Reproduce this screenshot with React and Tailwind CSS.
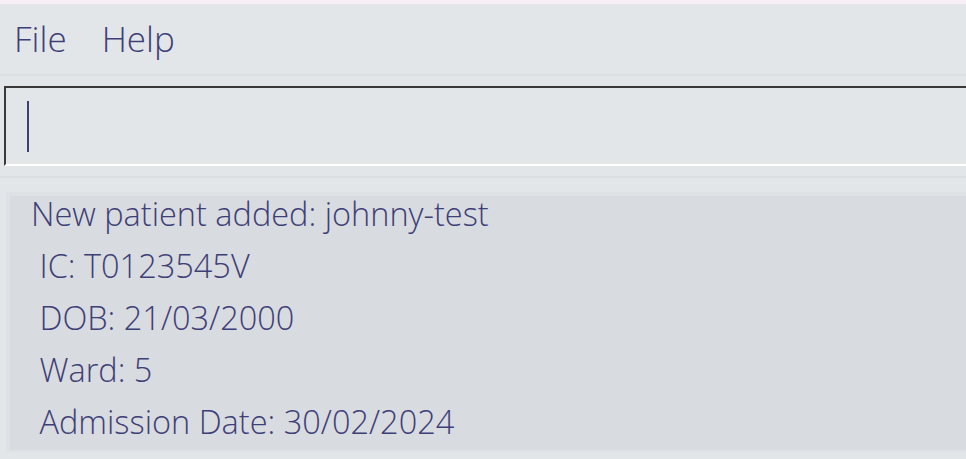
export default function App() {
  const lines = [
    "New patient added: johnny-test",
    " IC: T0123545V",
    " DOB: 21/03/2000",
    " Ward: 5",
    " Admission Date: 30/02/2024",
  ];

  return (
    <div
      className="w-[966px] h-[459px] overflow-hidden bg-[#e2e6e9] text-[#3f3f78] font-light"
      style={{ fontFamily: '"Open Sans", "Noto Sans", sans-serif' }}
    >
      <div className="h-[4px] bg-[#f6eff6]" />

      {/* menu bar */}
      <div className="h-[70px] flex items-center pl-[14px] gap-[35px] text-[35px]">
        <span>File</span>
        <span>Help</span>
      </div>
      <div className="h-[2px] bg-[#dcdfe2]" />

      {/* command box */}
      <div className="pt-[10px] pl-[4px]">
        <div className="h-[80px] border-l-2 border-t-2 border-b-2 border-l-[#3a3a3a] border-t-[#3a3a3a] border-b-white flex items-center pl-[21px]">
          <div className="w-[2px] h-[51px] bg-[#3f3f78]" />
        </div>
      </div>

      <div className="h-[10px]" />
      <div className="h-[2px] bg-[#dcdfe2]" />
      <div className="h-[14px]" />

      {/* result display */}
      <div className="ml-[6px] border-l-4 border-t-4 border-b-2 border-[#dfe2e5] bg-[#d8dbdf] h-[260px] pl-[21px]">
        {lines.map((l, i) => (
          <div key={i} className="h-[52px] text-[32.5px] leading-[36px] whitespace-pre">
            {l}
          </div>
        ))}
      </div>
    </div>
  );
}
